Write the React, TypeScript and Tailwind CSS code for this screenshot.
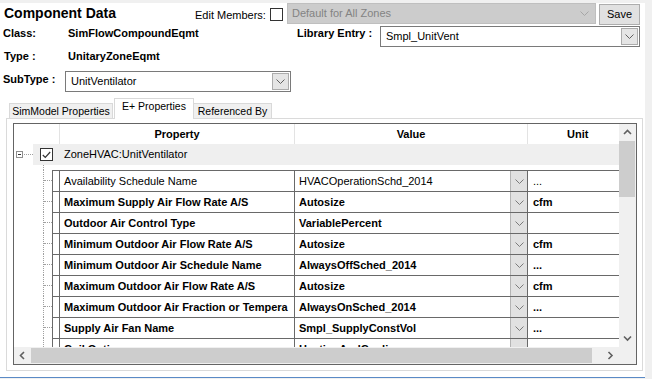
import React from "react";

function Chevron({ color = "#606060" }: { color?: string }) {
  return (
    <svg width="9" height="5" viewBox="0 0 9 5">
      <polyline points="0.5,0.5 4.5,4.5 8.5,0.5" fill="none" stroke={color} strokeWidth="1" />
    </svg>
  );
}

function ScrollArrow({ dir }: { dir: "up" | "down" | "left" | "right" }) {
  const pts: Record<string, string> = {
    up: "1,5 4.5,1.5 8,5",
    down: "1,1.5 4.5,5 8,1.5",
    left: "5,1 1.5,4.5 5,8",
    right: "1.5,1 5,4.5 1.5,8",
  };
  const vert = dir === "up" || dir === "down";
  return (
    <svg width={vert ? 9 : 7} height={vert ? 7 : 9} viewBox={vert ? "0 0 9 7" : "0 0 7 9"}>
      <polyline points={pts[dir]} fill="none" stroke="#606060" strokeWidth="1.6" />
    </svg>
  );
}

function Combo({ cls, text }: { cls: string; text: string }) {
  return (
    <div className={`${cls} h-[21px] bg-white border border-[#7a7a7a] flex items-center pr-[1px]`}>
      <div className="flex-1 pl-[5px] whitespace-nowrap overflow-hidden">{text}</div>
      <div className="w-[17px] h-[17px] bg-[#e5e5e5] border border-[#acacac] flex items-center justify-center">
        <Chevron />
      </div>
    </div>
  );
}

const rows = [
  { p: "Availability Schedule Name", v: "HVACOperationSchd_2014", u: "...", b: false },
  { p: "Maximum Supply Air Flow Rate A/S", v: "Autosize", u: "cfm", b: true },
  { p: "Outdoor Air Control Type", v: "VariablePercent", u: "", b: true },
  { p: "Minimum Outdoor Air Flow Rate A/S", v: "Autosize", u: "cfm", b: true },
  { p: "Minimum Outdoor Air Schedule Name", v: "AlwaysOffSched_2014", u: "...", b: true },
  { p: "Maximum Outdoor Air Flow Rate A/S", v: "Autosize", u: "cfm", b: true },
  { p: "Maximum Outdoor Air Fraction or Tempera", v: "AlwaysOnSched_2014", u: "...", b: true },
  { p: "Supply Air Fan Name", v: "Smpl_SupplyConstVol", u: "...", b: true },
  { p: "Coil Option", v: "HeatingAndCooling", u: "", b: true },
];

function TreeCell({ branch = true }: { branch?: boolean }) {
  return (
    <div className="w-[38px] h-full relative shrink-0">
      <div className="absolute left-[29px] top-0 bottom-0 border-l border-dotted border-[#a0a0a0]" />
      {branch && <div className="absolute left-[30px] top-[10px] w-[8px] border-t border-dotted border-[#a0a0a0]" />}
    </div>
  );
}

export default function App() {
  return (
    <div className="w-[652px] h-[379px] bg-[#f0f0f0] overflow-hidden font-['Liberation_Sans',Arial,sans-serif] text-black text-[11px] leading-[13px]">
      <div className="mt-[3px] w-[645px] h-[374px] bg-white flex flex-col">
        {/* Row A */}
        <div className="flex items-start h-[23px] shrink-0">
          <div className="ml-[4px] mt-[2px] w-[191px] text-[14px] leading-[16px] font-bold">Component Data</div>
          <div className="mt-[6px] w-[75px]">Edit Members:</div>
          <div className="mt-[5px] w-[13px] h-[13px] border border-[#333333] bg-white" />
          <div className="ml-[4px] w-[309px] h-[21px] bg-[#cccccc] border border-[#bfbfbf] flex items-center justify-between pl-[4px] pr-[6px] text-[#838383]">
            <span>Default for All Zones</span>
            <Chevron color="#a6a6a6" />
          </div>
          <div className="ml-[3px] mt-[1px] w-[41px] h-[21px] bg-[#e1e1e1] border border-[#adadad] flex items-center justify-center">
            Save
          </div>
        </div>
        {/* Row B */}
        <div className="flex items-start h-[21px] shrink-0">
          <div className="ml-[3px] mt-[1px] w-[65px] font-bold">Class:</div>
          <div className="mt-[1px] w-[229px] font-bold">SimFlowCompoundEqmt</div>
          <div className="mt-[1px] w-[83px] font-bold whitespace-nowrap">Library Entry :</div>
          <Combo cls="w-[260px]" text="Smpl_UnitVent" />
        </div>
        {/* Row C */}
        <div className="flex items-start h-[21px] shrink-0">
          <div className="ml-[4px] mt-[3px] w-[64px] font-bold">Type :</div>
          <div className="mt-[3px] font-bold">UnitaryZoneEqmt</div>
        </div>
        {/* Row D */}
        <div className="flex items-start h-[21px] mt-[3px] shrink-0">
          <div className="ml-[3px] mt-[2px] w-[62px] font-bold whitespace-nowrap">SubType :</div>
          <Combo cls="w-[226px]" text="UnitVentilator" />
        </div>
        {/* Tabs */}
        <div className="flex items-end h-[20px] mt-[6px] ml-[9px] relative z-10 shrink-0">
          <div className="w-[104px] h-[15px] border border-b-0 border-[#d9d9d9] bg-[#f0f0f0] flex items-center justify-center text-[10.5px] whitespace-nowrap">
            SimModel Properties
          </div>
          <div className="ml-[1px] w-[80px] h-[21px] -mb-[1px] border border-b-0 border-[#d9d9d9] bg-white flex justify-center pt-[1px] text-[10.5px] whitespace-nowrap">
            E+ Properties
          </div>
          <div className="w-[78px] h-[15px] border border-b-0 border-l-0 border-[#d9d9d9] bg-[#f0f0f0] flex items-center justify-center text-[10.5px] whitespace-nowrap">
            Referenced By
          </div>
        </div>
        {/* Panel */}
        <div className="ml-[6px] w-[637px] h-[253px] border border-[#dadada] bg-white shrink-0">
          <div className="ml-[6px] mt-[4px] w-[624px] h-[242px] border border-[#646464] grid grid-cols-[605px_17px] grid-rows-[223px_17px]">
            {/* content */}
            <div className="overflow-hidden flex flex-col">
              {/* header */}
              <div className="flex h-[20px] shrink-0 font-bold">
                <div className="w-[45px]" />
                <div className="w-[235px] border-l border-[#e3e3e3] flex items-center justify-center">Property</div>
                <div className="w-[233px] border-l border-[#e3e3e3] flex items-center justify-center">Value</div>
                <div className="w-[92px] border-l border-[#e3e3e3] flex items-center pl-[39px]">Unit</div>
              </div>
              {/* group row */}
              <div className="flex h-[21px] shrink-0">
                <div className="w-[19px] relative">
                  <div className="absolute left-[2px] top-[7px] w-[7px] h-[7px] border border-[#8f8f8f] flex items-center justify-center">
                    <div className="w-[3px] h-[1px] bg-[#333333]" />
                  </div>
                  <div className="absolute left-[10px] top-[10px] w-[9px] border-t border-dotted border-[#a0a0a0]" />
                </div>
                <div className="flex-1 bg-[#efefef] flex items-center">
                  <div className="ml-[7px] w-[13px] h-[13px] border border-[#333333] bg-white flex items-center justify-center">
                    <svg width="9" height="8" viewBox="0 0 9 8">
                      <polyline points="0.8,4 3.3,6.5 8.2,1" fill="none" stroke="#333333" strokeWidth="1.2" />
                    </svg>
                  </div>
                  <div className="ml-[11px]">ZoneHVAC:UnitVentilator</div>
                </div>
              </div>
              {/* spacer */}
              <div className="flex h-[5px] shrink-0">
                <TreeCell branch={false} />
              </div>
              {rows.map((r, i) => (
                <div key={i} className="flex h-[21px] shrink-0">
                  <TreeCell />
                  <div className={`flex flex-1 border-t border-l border-[#696969] ${r.b ? "font-bold" : ""}`}>
                    <div className="w-[6px]" />
                    <div className="w-[235px] border-l border-[#696969] pl-[4px] flex items-center whitespace-nowrap overflow-hidden">
                      {r.p}
                    </div>
                    <div className="w-[233px] border-l border-[#696969] flex">
                      <div className="flex-1 pl-[4px] flex items-center whitespace-nowrap overflow-hidden">{r.v}</div>
                      <div className="w-[17px] bg-[#e1e1e1] border-l border-[#b4b4b4] flex items-center justify-center">
                        <Chevron color="#7a7a7a" />
                      </div>
                    </div>
                    <div className="w-[92px] border-l border-[#696969] pl-[5px] flex items-center">{r.u}</div>
                  </div>
                </div>
              ))}
            </div>
            {/* vertical scrollbar */}
            <div className="bg-[#f0f0f0] flex flex-col">
              <div className="h-[17px] flex items-center justify-center">
                <ScrollArrow dir="up" />
              </div>
              <div className="h-[56px] mr-[1px] bg-[#cdcdcd]" />
              <div className="flex-1" />
              <div className="h-[17px] flex items-center justify-center">
                <ScrollArrow dir="down" />
              </div>
            </div>
            {/* horizontal scrollbar */}
            <div className="bg-[#f0f0f0] flex items-center">
              <div className="w-[17px] h-[17px] flex items-center justify-center">
                <ScrollArrow dir="left" />
              </div>
              <div className="w-[561px] h-[15px] bg-[#cdcdcd]" />
              <div className="flex-1" />
              <div className="w-[17px] h-[17px] flex items-center justify-center">
                <ScrollArrow dir="right" />
              </div>
            </div>
            <div className="bg-[#f0f0f0]" />
          </div>
        </div>
      </div>
      <div className="w-[645px] h-[1px] bg-[#5a8ac6]" />
    </div>
  );
}
